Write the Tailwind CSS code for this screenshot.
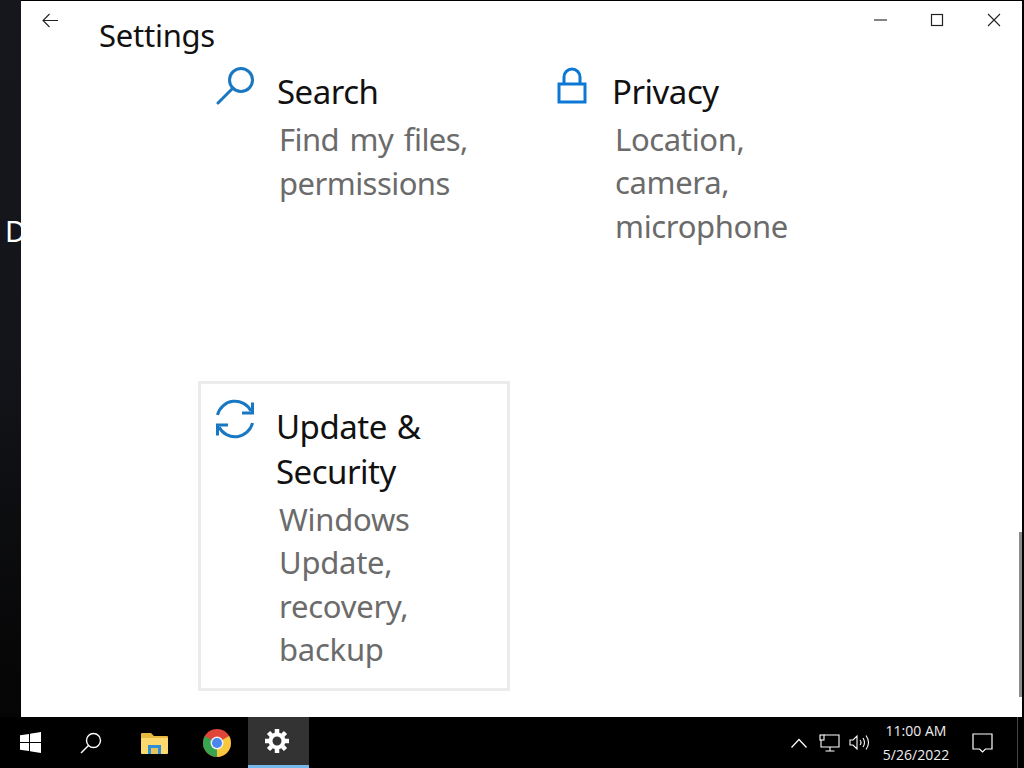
<!DOCTYPE html>
<html lang="en">
<head>
    <meta charset="UTF-8">
    <title>Settings</title>
    <script src="https://cdn.jsdelivr.net/npm/@tailwindcss/browser@4"></script>
</head>
<body class="h-screen w-[1024px] overflow-hidden bg-black font-['Noto_Sans',sans-serif] flex flex-col">
    <div class="h-[717px] flex">
        <!-- Desktop strip -->
        <div class="w-[21px] overflow-hidden bg-gradient-to-b from-[#15171d] via-[#14151a] to-[#050505] pt-[211px]">
            <span class="block pl-[5px] text-[29px] leading-[40px] text-white">D</span>
        </div>

        <!-- Settings window -->
        <div class="relative flex-1 mt-px bg-white overflow-hidden">
            <header class="h-[45px] flex items-start">
                <button class="w-[59px] h-[38px] flex items-center pl-[21px]">
                    <svg width="17" height="15" viewBox="0 0 17 15" fill="none" stroke="#222" stroke-width="1.1"><path d="M16 7.5H1M7.5 1 1 7.5 7.5 14"/></svg>
                </button>
                <h1 class="ml-[19px] mt-[13px] text-[31px] leading-[42px] text-[#111] tracking-[-0.25px]">Settings</h1>
                <div class="ml-auto flex items-center h-[38px] pr-[21px] gap-[43px]">
                    <svg width="14" height="14" viewBox="0 0 14 14" stroke="#222" stroke-width="1.1"><path d="M1 7H14"/></svg>
                    <svg width="14" height="14" viewBox="0 0 14 14" fill="none" stroke="#222" stroke-width="1.2"><rect x="1.5" y="1.5" width="11" height="11"/></svg>
                    <svg width="14" height="14" viewBox="0 0 14 14" stroke="#222" stroke-width="1.1"><path d="M1 1 13 13M13 1 1 13"/></svg>
                </div>
            </header>

            <div class="grid grid-cols-[312px_312px] auto-rows-[310px] gap-x-[25px] gap-y-[25px] ml-[177px]">
                <!-- Search -->
                <div class="flex p-[3px]">
                    <div class="w-[76px] shrink-0 pl-[15px] pt-[17px]">
                        <svg width="40" height="40" viewBox="0 0 40 40" fill="none" stroke="#1a78c2" stroke-width="3"><circle cx="25" cy="14" r="11.5"/><path d="M17 22 2 37" stroke-linecap="round"/></svg>
                    </div>
                    <div class="pt-[20px]">
                        <h2 class="mb-[4px] text-[33px] leading-[45px] text-[#111] tracking-[-0.5px]">Search</h2>
                        <p class="ml-[2px] text-[31px] leading-[43.5px] text-[#6b6b6b] tracking-[-0.55px] [word-spacing:3px]">Find my files,<br>permissions</p>
                    </div>
                </div>
                <!-- Privacy -->
                <div class="flex p-[3px]">
                    <div class="w-[74px] shrink-0 pl-[18px] pt-[17px]">
                        <svg width="32" height="40" viewBox="0 0 32 40" fill="none" stroke="#0a78d4" stroke-width="3"><rect x="3" y="18" width="26" height="18"/><path d="M8 18V11a8 8 0 0 1 16 0v7"/></svg>
                    </div>
                    <div class="pt-[20px]">
                        <h2 class="mb-[3.500px] text-[33px] leading-[45px] text-[#111] tracking-[-0.5px]">Privacy</h2>
                        <p class="ml-[3px] text-[31px] leading-[43.5px] text-[#6b6b6b] tracking-[-0.35px]">Location,<br>camera,<br>microphone</p>
                    </div>
                </div>
                <!-- Update & Security -->
                <div class="flex border-[3px] border-[#ebebeb]">
                    <div class="w-[76px] shrink-0 pl-[14px] pt-[15px]">
                        <svg width="40" height="40" viewBox="0 0 40 40" fill="none" stroke="#1a78c2" stroke-width="3"><path d="M2.5 16A18 18 0 0 1 36 12"/><path d="M37.500 24A18 18 0 0 1 4 28"/><path d="M37.500 3.500V14H27" /><path d="M2.500 36.500V26H13"/></svg>
                    </div>
                    <div class="pt-[20px]">
                        <h2 class="mb-[3.500px] -ml-px text-[33px] leading-[45px] text-[#111] tracking-[-0.5px] [word-spacing:2px]">Update &amp;<br>Security</h2>
                        <p class="ml-[2px] text-[31px] leading-[43.5px] text-[#6b6b6b] tracking-[-0.25px]">Windows<br>Update,<br>recovery,<br>backup</p>
                    </div>
                </div>
            </div>

            <!-- Overlay scrollbar -->
            <div class="absolute right-0 top-[531px] w-[3px] h-[165px] bg-[#8c8c8c]"></div>
        </div>

        <div class="w-[2px] bg-black"></div>
    </div>

    <!-- Taskbar -->
    <footer class="h-[51px] flex items-center bg-black text-white">
        <div class="w-[60px] flex justify-center">
            <svg width="21" height="21" viewBox="0 0 21 21" fill="#fff"><path d="M0 3.200 9 2V10H0ZM10 1.800 21 0V10H10ZM0 11H9V19L0 17.800ZM10 11H21V21L10 19.200Z"/></svg>
        </div>
        <div class="w-[61px] flex justify-center">
            <svg width="22" height="22" viewBox="0 0 22 22" fill="none" stroke="#fff" stroke-width="1.400"><circle cx="13.500" cy="8.500" r="7"/><path d="M8.500 13.500 1 21"/></svg>
        </div>
        <div class="w-[61px] flex justify-center ml-[3px]">
            <svg width="27" height="22" viewBox="0 0 27 22"><path d="M0 2a1 1 0 0 1 1-1h9l3 3h13a1 1 0 0 1 1 1v3H0Z" fill="#e8b93f"/><path d="M0 6H27V21a1 1 0 0 1-1 1H1a1 1 0 0 1-1-1Z" fill="#fbd96f"/><path d="M7 22V13H20V22H17V16H10V22Z" fill="#2e8fd6"/><path d="M10 16H17V22H10Z" fill="#e5c25b"/></svg>
        </div>
        <div class="w-[63px] flex justify-center">
            <svg width="28" height="28" viewBox="0 0 28 28">
                <circle cx="14" cy="14" r="14" fill="#e0453a"/>
                <path d="M14 14 26.100 7A14 14 0 0 1 14 28Z" fill="#f8c93c"/>
                <path d="M14 14 14 28A14 14 0 0 1 1.900 7Z" fill="#37a550"/>
                <circle cx="14" cy="14" r="6.500" fill="#eee"/>
                <circle cx="14" cy="14" r="5" fill="#4a87ec"/>
            </svg>
        </div>
        <div class="w-[61px] h-full bg-[#333] border-b-[3px] border-[#76b9ed] flex items-center justify-center pr-[3px]">
            <svg width="24" height="24" viewBox="0 0 24 24" fill="none" stroke="#fff" stroke-width="4"><circle cx="12" cy="12" r="6.500"/><path stroke-width="4.500" d="M12 0V4M12 20V24M0 12H4M20 12H24M3.500 3.500 6.300 6.300M17.700 17.700 20.500 20.500M20.500 3.500 17.700 6.300M6.300 17.700 3.500 20.500"/></svg>
        </div>

        <div class="ml-auto flex items-center">
            <svg width="16" height="10" viewBox="0 0 16 10" fill="none" stroke="#fff" stroke-width="1.200"><path d="M.5 9.500 8 1.500 15.500 9.500"/></svg>
            <svg class="ml-[12px]" width="21" height="18" viewBox="0 0 21 18" fill="none" stroke="#fff" stroke-width="1.100"><path d="M5 1H20V13H2V6M11 13V16.500M6.500 17H15.500"/><rect x="1" y="1" width="4" height="5"/></svg>
            <svg class="ml-[9px]" width="21" height="18" viewBox="0 0 21 18" fill="none" stroke="#fff" stroke-width="1.100"><path d="M1 6H4L8 2V15L4 11H1ZM11 6Q13 8.500 11 11M14 4Q17 8.500 14 13M17 1.500Q22 8.500 17 15.500"/></svg>
            <div class="w-[92px] text-center text-[14px] leading-[24px] text-[#eee] font-['Open_Sans',sans-serif]">
                <div>11:00 AM</div>
                <div>5/26/2022</div>
            </div>
            <svg class="ml-[10px]" width="21" height="20" viewBox="0 0 21 20" fill="none" stroke="#fff" stroke-width="1.200"><path d="M1 1H20V16H13.500L10.500 19 7.500 16H1Z"/></svg>
            <div class="ml-[24px] w-px h-[51px] bg-[#444]"></div>
            <div class="w-[6px]"></div>
        </div>
    </footer>
</body>
</html>
